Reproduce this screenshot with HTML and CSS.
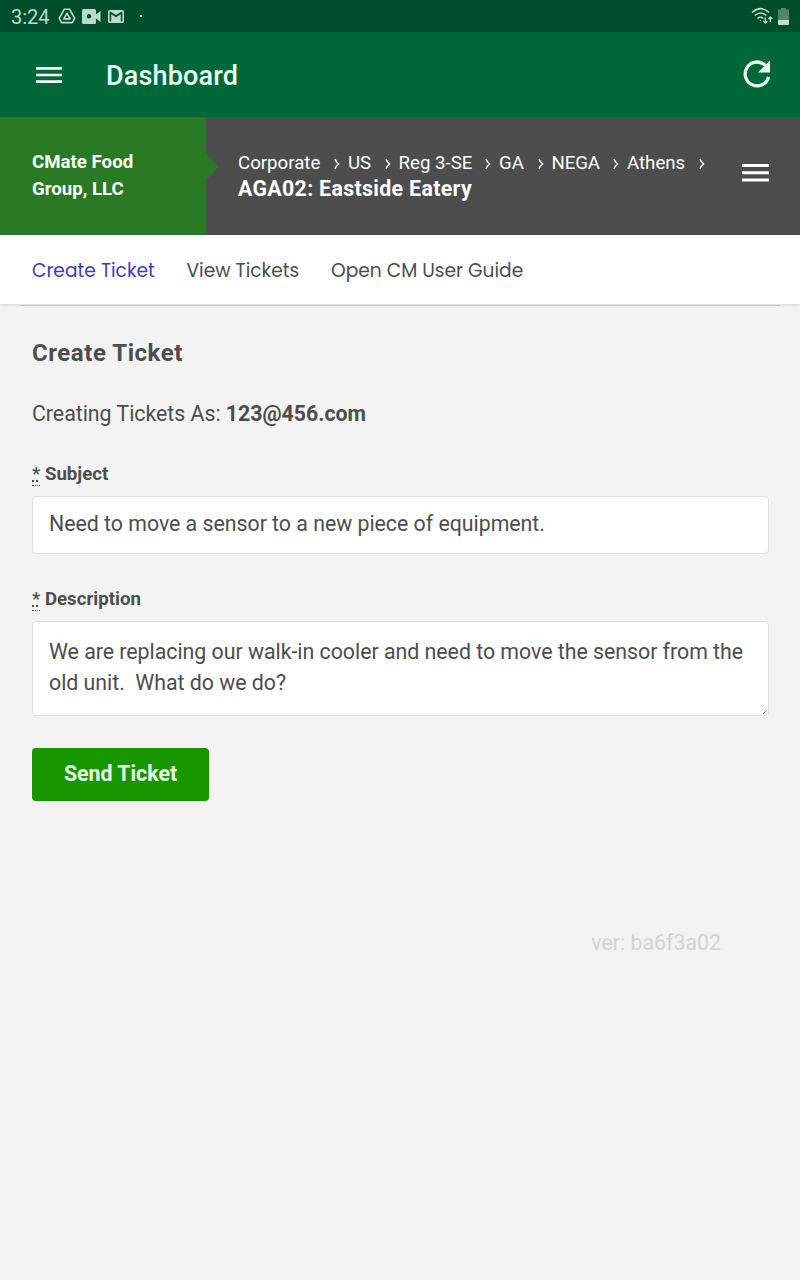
FILE: index.html
```html
<!DOCTYPE html>
<html lang="en">
<head>
<meta charset="utf-8">
<title>Dashboard</title>
<link rel="stylesheet" href="styles.css">
</head>
<body>
<div class="status">
  <span class="clock">3:24</span>
  <svg class="drive" width="18" height="16" viewBox="0 0 18 16" fill="none" stroke="currentColor" stroke-width="1.6" stroke-linejoin="round"><path d="M6.300 1.200h5.200l5.200 9.200-2.400 4.200H3.600L1.200 10.400z"/><path d="M9 5.300l3.300 5.600H5.700z"/></svg>
  <svg class="cam" width="19" height="15" viewBox="0 0 19 15"><path fill="currentColor" fill-rule="evenodd" d="M1.500 0h11q1.500 0 1.500 1.500v4L18.500 2v11L14 9.500v4q0 1.500-1.500 1.500h-11Q0 15 0 13.500v-12Q0 0 1.500 0zM7 5a2.300 2.300 0 1 0 .01 0z"/></svg>
  <svg class="mail" width="16" height="13" viewBox="2 4 20 16" preserveAspectRatio="none" fill="currentColor"><path d="M20 18h-2V9.250L12 13 6 9.250V18H4V6h1.200l6.800 4.250L18.800 6H20m0-2H4c-1.110 0-2 .89-2 2v12a2 2 0 0 0 2 2h16a2 2 0 0 0 2-2V6a2 2 0 0 0-2-2z" fill-rule="evenodd"/></svg>
  <i class="dot"></i>
  <svg class="wifi" width="22" height="18" viewBox="0 0 22 18" fill="none" stroke="currentColor" stroke-width="1.500"><path d="M1 5.400q8.500-7.600 17 0M3.700 8.500q6-5 11.600 0M6.400 11.500q3-2.500 6 0"/><circle cx="9.500" cy="13.500" r=".7" fill="currentColor" stroke="none"/><path d="M14.300 10.500v5.500m-2-2 2 2 2-2M19.300 15V10m-2 2 2-2 2 2" stroke-width="1.300"/></svg>
  <svg class="battery" width="11" height="17" viewBox="0 0 11 17"><path d="M3 0h5v1.500h2.200q.8 0 .8.800V12H0V2.300q0-.8.8-.8H3z" fill="#4f8768"/><path d="M0 12h11v4q0 1-1 1H1q-1 0-1-1z" fill="#c4dccf"/></svg>
</div>
<header class="appbar">
  <svg class="menu" width="26" height="16" viewBox="0 0 26 16" fill="#fff"><path d="M0 0h26v2.700H0zM0 6.700h26v2.600H0zM0 13.300h26V16H0z"/></svg>
  <h1>Dashboard</h1>
  <svg class="reload" width="28" height="28" viewBox="0 0 28 28"><path d="M22.300 5.300A11.900 11.900 0 1 0 25.600 17" fill="none" stroke="#eafff5" stroke-width="3.300"/><path d="M27 .5V12.500H15z" fill="#eafff5"/></svg>
</header>
<section class="site">
  <div class="company">CMate Food<br>Group, LLC
    <svg class="notch" width="14" height="28" viewBox="0 0 14 28"><path d="M0 0l13.500 14L0 28z" fill="#2a7a25"/></svg>
  </div>
  <div class="location">
    <div class="crumbs">
      <span class="c1">Corporate</span><svg viewBox="0 0 6 12"><path d="M1 1Q2 4 4.600 6 2 8 1 11"/></svg>
      <span class="c2">US</span><svg viewBox="0 0 6 12"><path d="M1 1Q2 4 4.600 6 2 8 1 11"/></svg>
      <span class="c3">Reg 3-SE</span><svg viewBox="0 0 6 12"><path d="M1 1Q2 4 4.600 6 2 8 1 11"/></svg>
      <span class="c4">GA</span><svg viewBox="0 0 6 12"><path d="M1 1Q2 4 4.600 6 2 8 1 11"/></svg>
      <span class="c5">NEGA</span><svg viewBox="0 0 6 12"><path d="M1 1Q2 4 4.600 6 2 8 1 11"/></svg>
      <span class="c6">Athens</span><svg viewBox="0 0 6 12"><path d="M1 1Q2 4 4.600 6 2 8 1 11"/></svg>
    </div>
    <div class="unit">AGA02: Eastside Eatery</div>
  </div>
  <svg class="site-menu" width="27" height="18" viewBox="0 0 27 18" fill="#fff"><path d="M0 0h27v3H0zM0 7.200h27v3H0zM0 14.500h27v3H0z"/></svg>
</section>
<nav class="tabs">
  <a class="t1">Create Ticket</a><a class="t2">View Tickets</a><a class="t3">Open CM User Guide</a>
</nav>
<main>
  <hr>
  <h2>Create Ticket</h2>
  <p class="as">Creating Tickets As: <b>123@456.com</b></p>
  <label><abbr>*</abbr> Subject</label>
  <div class="field subject">Need to move a sensor to a new piece of equipment.</div>
  <label><abbr>*</abbr> Description</label>
  <div class="field description"><span>We are replacing our walk-in cooler and need to move the sensor from the</span>
<span>old unit.  What do we do?</span><svg class="grip" width="4" height="4" viewBox="0 0 4 4"><path d="M.5 3.500l1-1M2.500 1.500l1-1" stroke="#222"/></svg></div>
  <button>Send Ticket</button>
  <footer>ver: ba6f3a02</footer>
</main>
</body>
</html>
```
FILE: styles.css
```css
* { box-sizing: border-box; }
body { margin: 0; height: 1280px; background: #f3f3f3; color: #4d4d4d; font-family: Roboto, sans-serif; font-size: 21.33px; overflow: hidden; }
svg { display: block; flex: none; }
.status { height: 32px; background: #004d2b; color: #bcdccb; display: flex; align-items: center; padding: 0 11px; }
.clock { width: 47px; font-size: 20px; line-height: 32px; padding-top: 1px; white-space: nowrap; }
.cam { margin-left: 6px; }
.mail { margin-left: 7px; }
.dot { width: 2px; height: 2px; background: #bcdccb; margin-left: 16px; }
.wifi { margin-left: auto; }
.battery { margin-left: 5px; }
.appbar { height: 85px; background: #006838; display: flex; align-items: center; padding: 0 29px 0 36px; }
.appbar h1 { margin: 0 auto 0 44px; padding-top: 3px; color: #eafff5; font-size: 27px; font-weight: 500; line-height: 32px; letter-spacing: .17px; }
.reload { margin-bottom: 2px; }
.site { height: 118px; background: #4d4d4d; color: #fff; display: flex; }
.company { position: relative; width: 206px; padding: 32px 0 0 32px; background: #2a7a25; font-size: 18.67px; font-weight: 700; line-height: 27px; }
.notch { position: absolute; left: 205px; top: 36px; }
.location { width: 536px; padding: 33px 0 0 32px; }
.crumbs { display: flex; height: 26px; font-size: 18.67px; line-height: 26px; white-space: nowrap; }
.crumbs svg { width: 6px; height: 12px; margin: 8px 8px 0 0; fill: none; stroke: #fff; stroke-width: 1.5; }
.c1 { width: 96px; } .c2 { width: 36.5px; } .c3 { width: 86.5px; } .c4 { width: 38.500px; } .c5 { width: 61.500px; letter-spacing: -.1px; } .c6 { width: 72px; }
.unit { font-weight: 700; line-height: 25px; letter-spacing: .33px; }
.site-menu { margin-top: 47px; }
.tabs { position: relative; height: 69px; background: #fff; box-shadow: 0 1px 3px #0002; display: flex; gap: 32px; padding: 1px 32px 0; font-family: Poppins, sans-serif; font-size: 18.67px; line-height: 70px; white-space: nowrap; }
.t1 { width: 122.500px; color: #4b37b5; }
.t2 { width: 112.500px; }
main { padding: 0 31px 0 32px; }
hr { position: relative; height: 1px; border: 0; margin: 1px -11px 0; background: #c9c9c9; }
h2 { margin: 31px 0 0; font-size: 24px; line-height: 32px; letter-spacing: .54px; }
.as { margin: 29px 0 0; line-height: 32px; letter-spacing: -.02px; }
label { display: block; margin-top: 31px; height: 27px; font-size: 18.67px; font-weight: 700; line-height: 27px; }
abbr { display: inline-block; height: 25px; line-height: 27px; vertical-align: top; border-bottom: 1px dotted #4d4d4d; text-decoration: underline dotted 2px; text-underline-offset: 0; text-decoration-skip-ink: none; font-weight: 500; }
.field { position: relative; margin-top: 8px; padding: 0 16px; background: #fff; border: 1px solid #e2e2e2; border-radius: 4px; white-space: pre; letter-spacing: -.02px; }
.subject { height: 58px; line-height: 54px; }
.subject + label { margin-top: 32px; }
.description { height: 95px; padding-top: 14px; line-height: 31px; }
.grip { position: absolute; right: 1px; bottom: 1px; }
button { display: block; width: 177px; height: 53px; margin: 32px 0 0; padding: 0 0 2px; border: 0; border-radius: 4px; background: #179600; color: #eaffea; font: 700 21.33px/51px Roboto, sans-serif; }
footer { margin: 126px 48px 0 0; line-height: 32px; text-align: right; color: #d2d2d2; }
```
